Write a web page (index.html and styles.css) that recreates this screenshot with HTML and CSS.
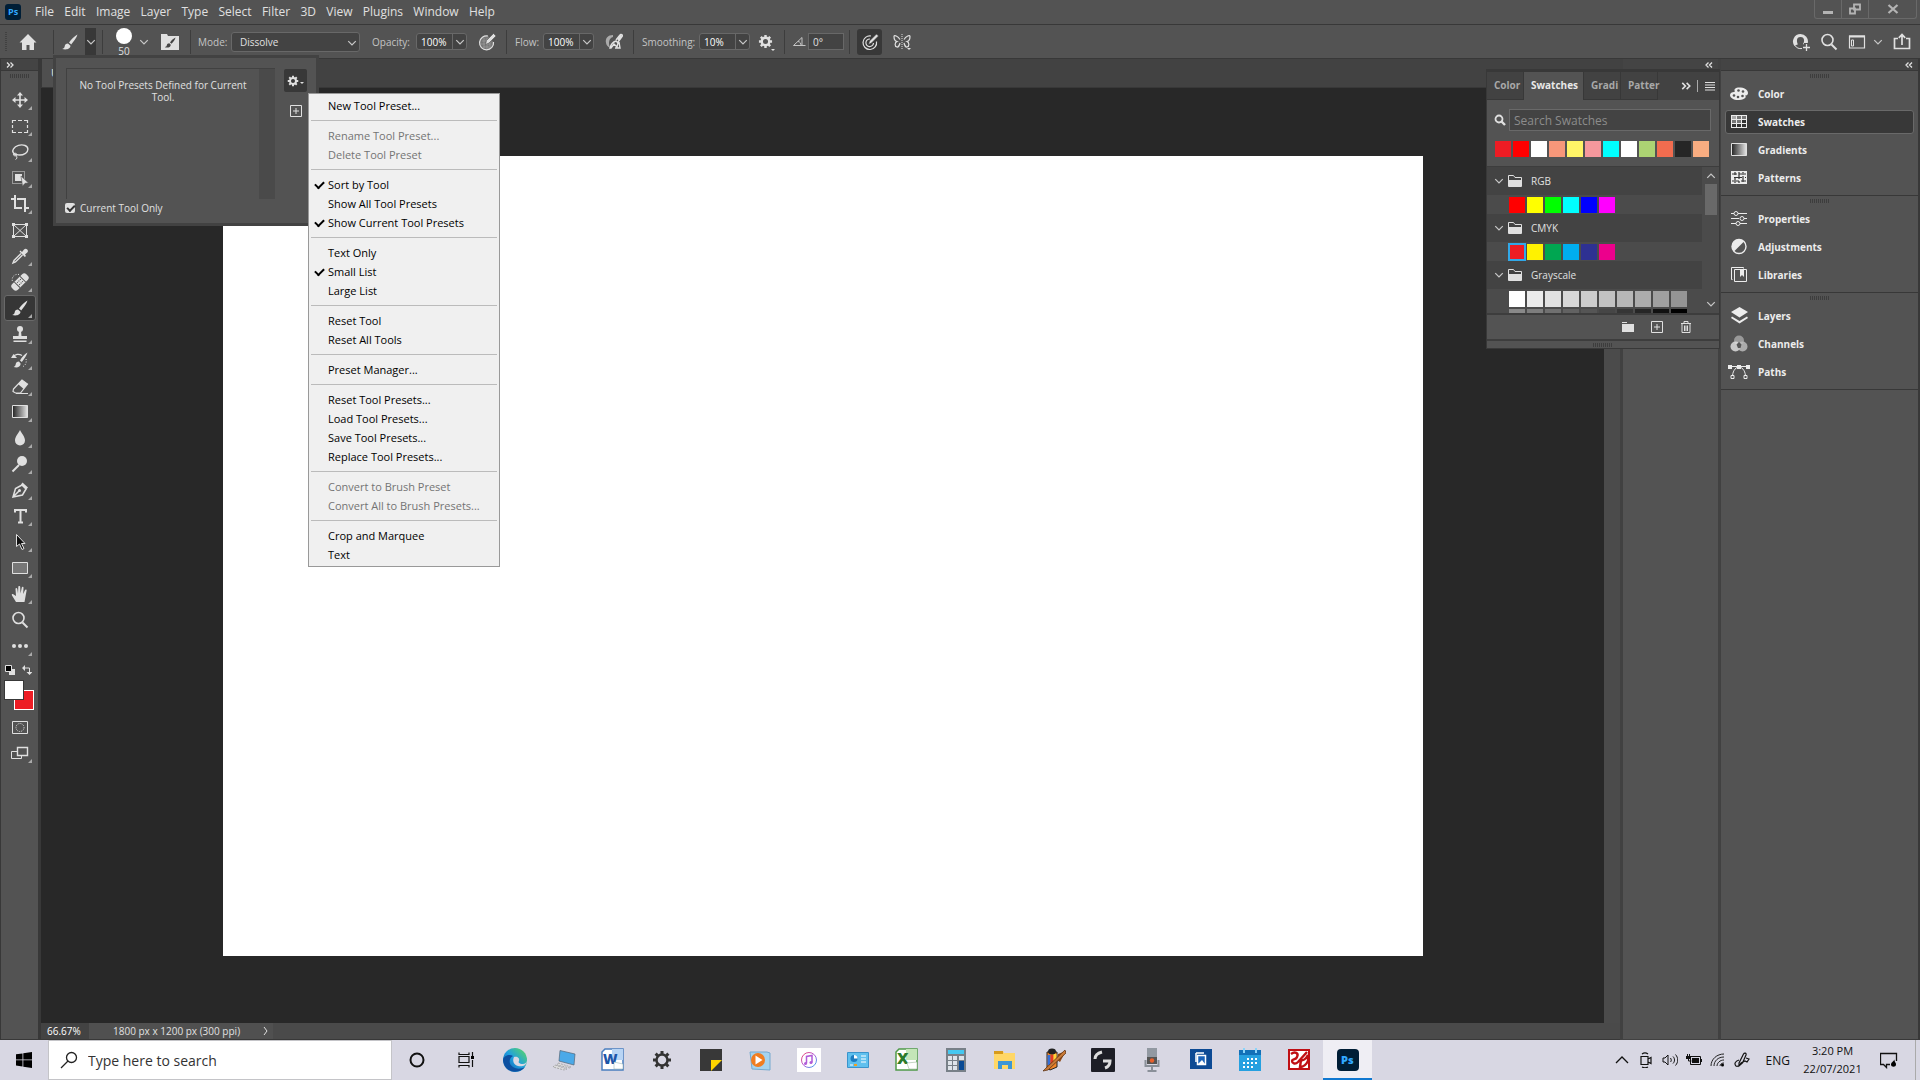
FILE: index.html
```html
<!DOCTYPE html>
<html lang="en">
  <head>
    <meta charset="UTF-8" />
    <meta name="viewport" content="width=device-width, initial-scale=1.0" />
    <title>Photoshop</title>
    <link rel="stylesheet" href="styles.css">
  </head>
  <body>
    <svg class="sprite" aria-hidden="true">
      <defs>
        <linearGradient id="fade"><stop offset="0" stop-color="#222" /><stop offset="1" stop-color="#e6e6e6" /></linearGradient>
        <linearGradient id="edge-blue" x1="0" y1="1" x2="1" y2="0"><stop offset="0" stop-color="#0c4fa0" /><stop offset="0.5" stop-color="#1f9fe0" /><stop offset="1" stop-color="#5fdc5a" /></linearGradient>
        <linearGradient id="tune" x1="0" y1="0" x2="1" y2="1"><stop offset="0" stop-color="#f0446c" /><stop offset="0.5" stop-color="#b05ad8" /><stop offset="1" stop-color="#30b0f0" /></linearGradient>
        <symbol id="chevron" viewBox="0 0 8 8"><path d="M1 2.500l3 3 3-3" fill="none" stroke="currentColor" /></symbol>
        <symbol id="double" viewBox="0 0 8 6"><path d="M1 .5L3.500 3 1 5.500M4.500.5L7 3 4.500 5.500" fill="none" stroke="currentColor" stroke-width="1.300" /></symbol>
        <symbol id="brush" viewBox="0 0 18 18"><path d="M16.500 1.500c-3 1.500-6.500 5-8.500 8l2.200 2c2.500-3 5.500-7 6.300-10zM7 10.500c-2 0-3 1-3.300 2.700-.2 1.300-1 2.200-2.500 2.800 3.300.9 8 .5 8.300-3.200z" fill="currentColor" /></symbol>
        <symbol id="gear" viewBox="0 0 16 16"><circle cx="8" cy="8" r="4" fill="none" stroke="currentColor" stroke-width="2.600" /><path d="M8 1v3M8 12v3M1 8h3M12 8h3M3 3l2.200 2.200M10.800 10.800L13 13M13 3l-2.200 2.200M5.200 10.800L3 13" stroke="currentColor" stroke-width="2.600" /></symbol>
        <symbol id="plus-box" viewBox="0 0 12 12"><path d="M.5.5h11v11H.5zM6 3v6M3 6h6" fill="none" stroke="currentColor" /></symbol>
        <symbol id="folder" viewBox="0 0 14 12"><path d="M.5 11.500V.5h5l1.500 2h6.500v9z" fill="none" stroke="currentColor" /><path d="M1 5h12v6H1z" fill="currentColor" /></symbol>
        <symbol id="glass" viewBox="0 0 18 18"><circle cx="7.500" cy="7" r="5.500" fill="none" stroke="currentColor" stroke-width="1.600" /><path d="M11.500 11.500l5 5" stroke="currentColor" stroke-width="2" /></symbol>
        <symbol id="move" viewBox="0 0 18 18"><path d="M9 3v12M3 9h12" stroke="currentColor" stroke-width="1.600" /><path d="M9 1l3 3.500H6zM9 17l3-3.500H6zM1 9l3.500-3v6zM17 9l-3.500-3v6z" fill="currentColor" /></symbol>
        <symbol id="marquee" viewBox="0 0 18 18"><path d="M1.500 6V3.500H5M7 3.500h4M13 3.500h3.500V6M16.500 8v3M16.500 13v2.500H13M11 15.500H7M5 15.500H1.500V13M1.500 11V8" fill="none" stroke="currentColor" stroke-width="1.200" /></symbol>
        <symbol id="lasso" viewBox="0 0 18 18"><path d="M5 12c-3-1-4-4-2.500-6.200C4.500 2.500 10 1 14 2.500c4 1.600 3.500 5.800.5 7.800-3 1.900-7 2-9.500 1" fill="none" stroke="currentColor" stroke-width="1.400" /><path d="M5.500 10.500c-2-.8-3.500.2-3 1.500s3 1.200 3.500 0M5 12.500c1.500 1.500 1 3.500-.5 4" fill="none" stroke="currentColor" /></symbol>
        <symbol id="object" viewBox="0 0 18 18"><path d="M1.500 2.500h12v12h-12z" fill="none" stroke="currentColor" stroke-dasharray="1 1" /><path d="M4 5h7v7H4z" fill="currentColor" /><path d="M10 7l7.500 7-3.500.3-2.500 3z" fill="currentColor" stroke="#535353" stroke-width=".6" /></symbol>
        <symbol id="crop" viewBox="0 0 18 18"><path d="M4 0v13h7M0 4h3M6 4h8v13M14 13h4" fill="none" stroke="currentColor" stroke-width="2" /></symbol>
        <symbol id="frame" viewBox="0 0 18 18"><path d="M2.500 3.500h13v12h-13zM2.500 3.500l13 12M15.500 3.500l-13 12" fill="none" stroke="currentColor" /><path d="M1 2h3v3H1zM14 2h3v3h-3zM1 14h3v3H1zM14 14h3v3h-3z" fill="currentColor" /></symbol>
        <symbol id="dropper" viewBox="0 0 18 18"><path d="M10 6.500l-7 7-1 2.500 2.500-1 7-7" fill="none" stroke="currentColor" stroke-width="1.400" /><path d="M8.500 4.500l1-1L11 5l2-2.500c2-2 5 .5 3.500 2.800L14 7.500 15 9l-1.200 1z" fill="currentColor" /></symbol>
        <symbol id="heal" viewBox="0 0 18 18"><g transform="rotate(-45 9 9)"><rect x="-1" y="5" width="20" height="8" rx="3" fill="currentColor" /><path d="M5 5v8M13 5v8" stroke="#535353" /><path d="M6.500 7h1v1h-1zM8.500 7h1v1h-1zM10.500 7h1v1h-1zM6.500 10h1v1h-1zM8.500 10h1v1h-1zM10.500 10h1v1h-1z" fill="#444" /></g><path d="M8 1.500C4 .5 0 4 1.500 8.500" fill="none" stroke="currentColor" stroke-dasharray="1 1.500" /></symbol>
        <symbol id="stamp" viewBox="0 0 18 18"><circle cx="9" cy="4" r="3" fill="currentColor" /><path d="M8 6h2l.5 5H16v3H2v-3h5.500zM2.500 15.500h13v1.500h-13z" fill="currentColor" /></symbol>
        <symbol id="history" viewBox="0 0 18 18"><path d="M16.500 1.500c-3 1.500-6 5-7.500 8l1.800 1.500c2.200-3 5-6.500 5.700-9.500zM8 10.500c-2 0-3 1-3.300 2.700-.2 1.300-1 2.200-2 2.800 3 .9 6.500.5 7-3.200z" fill="currentColor" /><path d="M2 6c2-3 6-3.500 9-1.500" fill="none" stroke="currentColor" stroke-width="1.300" /><path d="M0 7l2.500-4L6 7z" fill="currentColor" /><path d="M15 8c1 4-1 7-4 8" fill="none" stroke="currentColor" stroke-dasharray="1 1.500" /></symbol>
        <symbol id="eraser" viewBox="0 0 18 18"><path d="M2.500 12L11 3l5.500 4-7 9h-5L2 14.500z" fill="none" stroke="currentColor" stroke-width="1.200" /><path d="M7 7l4-4 5.500 4-3.800 5z" fill="currentColor" /><path d="M5 16.500h12" stroke="currentColor" /></symbol>
        <symbol id="gradient" viewBox="0 0 18 18"><path d="M1.500 2.500h15v12h-15z" fill="url(#fade)" stroke="#e0e0e0" /></symbol>
        <symbol id="drop" viewBox="0 0 18 18"><path d="M9 1c1.500 3.500 5 6.500 5 10.500a5 5 0 0 1-10 0C4 7.500 7.500 4.500 9 1z" fill="currentColor" /></symbol>
        <symbol id="dodge" viewBox="0 0 18 18"><circle cx="11" cy="6" r="5" fill="currentColor" /><path d="M8 10l-6.500 6.500" stroke="currentColor" stroke-width="2" /></symbol>
        <symbol id="pen" viewBox="0 0 18 18"><path d="M2 16l2.500-8.500L11 4l4 4-3.500 6zM2 16l6-6" fill="none" stroke="currentColor" stroke-width="1.500" /><circle cx="8.500" cy="9.500" r="1.500" fill="currentColor" /><path d="M11.500 1.500l5.500 5-1.800 2L10 3.500z" fill="currentColor" /></symbol>
        <symbol id="type" viewBox="0 0 18 18"><path d="M4 5.500V3h11v2.500M9.500 3v12.500M7 15.500h5" fill="none" stroke="currentColor" stroke-width="2" /></symbol>
        <symbol id="arrow" viewBox="0 0 18 18"><path d="M5.500 1.500v12l3-2.500 2.500 5.500 2-1-2.500-5h3.500z" fill="#111" stroke="currentColor" /></symbol>
        <symbol id="rect" viewBox="0 0 18 18"><path d="M1.500 3.500h15v11h-15z" fill="#777" stroke="currentColor" /></symbol>
        <symbol id="hand" viewBox="0 0 18 18"><path d="M5 17L1 10.500c-1-1.500 1-2 2-.8L5 11 4.500 4c0-1.200 1.600-1.200 1.800 0L7 8.500 7.300 2c0-1.300 1.900-1.300 1.900 0l.3 6.500L10.800 2.500c.2-1.200 1.800-1 1.700.3L12.200 9l1.800-4c.5-1 1.900-.6 1.600.6L13.500 17z" fill="currentColor" /></symbol>
        <symbol id="dots" viewBox="0 0 18 18"><circle cx="3" cy="9" r="2" fill="currentColor" /><circle cx="9" cy="9" r="2" fill="currentColor" /><circle cx="15" cy="9" r="2" fill="currentColor" /></symbol>
        <symbol id="pressure" viewBox="0 0 18 18"><path d="M10 3a7 7 0 1 0 5.500 6" fill="#777" stroke="currentColor" stroke-width="1.200" /><path d="M4 8h7M3 11h9M5 14h6M6 5v10M9 5v11M12 9v6" stroke="#aaa" stroke-width=".5" /><path d="M7.500 11.500l1-4L15.500.5 18 3l-7 7z" fill="currentColor" stroke="#535353" stroke-width=".6" /></symbol>
        <symbol id="target" viewBox="0 0 18 18"><path d="M10 3a6.800 6.800 0 1 0 5.500 5.500M9 6a3.800 3.800 0 1 0 3.500 4" fill="none" stroke="currentColor" stroke-width="1.200" /><path d="M7.500 11.500l1-3.500L15.500 1 17.500 3l-7 7z" fill="currentColor" stroke="#383838" stroke-width=".6" /></symbol>
      </defs>
    </svg>

    <header class="menubar">
      <svg class="ps-logo" viewBox="0 0 16 16"><rect width="16" height="16" rx="3" fill="#001e36" /><text x="3" y="11" class="ps-text">Ps</text></svg>
      <nav class="menus">
        <button>File</button><button>Edit</button><button>Image</button><button>Layer</button><button>Type</button><button>Select</button><button>Filter</button><button>3D</button><button>View</button><button>Plugins</button><button>Window</button><button>Help</button>
      </nav>
      <div class="window-controls">
        <button aria-label="Minimize"><svg viewBox="0 0 12 12"><path d="M1 8h10v3H1z" fill="currentColor" /></svg></button>
        <button aria-label="Restore"><svg viewBox="0 0 12 12"><path d="M5 1.500h6v5H5zM1 5.500h5v5H1z" fill="none" stroke="currentColor" stroke-width="1.800" /></svg></button>
        <button class="close" aria-label="Close"><svg viewBox="0 0 12 12"><path d="M1.500 2l9 8M10.500 2l-9 8" stroke="currentColor" stroke-width="2.200" /></svg></button>
      </div>
    </header>

    <section class="options">
      <span class="grip-v"></span>
      <button class="home" aria-label="Home"><svg class="icon" viewBox="0 0 18 18"><path d="M9 1L.5 9.500H3V17h4.500v-5h3v5H15V9.500h2.500z" fill="currentColor" /></svg></button>
      <span class="sep"></span>
      <button class="tool-now" aria-label="Brush"><svg class="icon"><use href="#brush" /></svg></button>
      <button class="tool-open" aria-label="Tool presets"><svg class="chev"><use href="#chevron" /></svg></button>
      <span class="sep"></span>
      <button class="tip"><i></i>50</button>
      <svg class="chev"><use href="#chevron" /></svg>
      <button class="brush-panel" aria-label="Brush settings"><svg class="icon" viewBox="0 0 18 18"><path d="M0 1h6l1 2h11v14H0z" fill="currentColor" /><path d="M14.500 4.500c-3 1.500-4 3-5.500 5l1.500 1.300c2-2 3.500-4 4-6.300zM8.300 10.300c-1.500 0-2.300.7-2.500 2-.1 1-1 1.500-2 2 3 .7 5.800.2 6-2.500z" fill="#444" /></svg></button>
      <span class="sep"></span>
      <label for="mode" class="mode-label">Mode:</label>
      <span class="select-box"><select id="mode"><option>Dissolve</option></select><svg class="chev"><use href="#chevron" /></svg></span>
      <label for="opacity" class="opacity-label">Opacity:</label>
      <span class="number"><input id="opacity" type="text" value="100%"><button aria-label="Opacity slider"><svg class="chev"><use href="#chevron" /></svg></button></span>
      <button class="pressure" aria-label="Pressure for opacity"><svg class="icon"><use href="#pressure" /></svg></button>
      <span class="sep"></span>
      <label for="flow" class="flow-label">Flow:</label>
      <span class="number"><input id="flow" type="text" value="100%"><button aria-label="Flow slider"><svg class="chev"><use href="#chevron" /></svg></button></span>
      <button class="pressure" aria-label="Airbrush"><svg class="icon" viewBox="0 0 18 18"><path d="M8 2C3 2 0 5 1 10c.5 2.500 2 4 4 4.500C3 10 4 5 8 4z" fill="#aaa" /><path d="M5 15c1-4 3-6 6-7l2 2-1 4-3-3-3 4zM11 7l4-5c1-1.500 3 0 2 1.500l-4 5.500M14 9l1 6-5 0" fill="none" stroke="currentColor" stroke-width="1.400" /><path d="M12 6l3.500-4.500 2 1.500L14 8z" fill="currentColor" /></svg></button>
      <span class="sep"></span>
      <label for="smoothing" class="smoothing-label">Smoothing:</label>
      <span class="number"><input id="smoothing" type="text" value="10%"><button aria-label="Smoothing slider"><svg class="chev"><use href="#chevron" /></svg></button></span>
      <button class="smooth-gear" aria-label="Smoothing options"><svg class="icon" viewBox="0 0 18 18"><use href="#gear" width="15" height="15" y="1" /><path d="M13 16h4l-2 2z" fill="currentColor" /></svg></button>
      <span class="sep"></span>
      <label for="angle" class="angle-label" aria-label="Angle"><svg viewBox="0 0 14 10"><path d="M10 .5L1.500 8.500h12M6 4.500c2 0 3 2 3 4M10 .5v8" fill="none" stroke="currentColor" /></svg></label>
      <input id="angle" class="angle" type="text" value="0°">
      <span class="sep"></span>
      <button class="size-pressure" aria-label="Pressure for size"><svg class="icon"><use href="#target" /></svg></button>
      <button class="symmetry" aria-label="Symmetry"><svg class="icon" viewBox="0 0 18 18"><path d="M7 6.500C5 3 1 1.500 1 3.500c0 2.500 1 4.500 3 5C1.500 9.500 1.500 13.500 4 14c2 .4 2.500-2 3-4M11 6.500C13 3 17 1.500 17 3.500c0 2.500-1 4.500-3 5 2.500 1 2.500 5 0 5.500-2 .4-2.500-2-3-4" fill="none" stroke="currentColor" stroke-width="1.200" /><path d="M9 1v16" stroke="currentColor" stroke-dasharray="1 1" /><path d="M14 15h4l-2 2z" fill="currentColor" /></svg></button>
      <div class="options-right">
        <button aria-label="Account"><svg class="icon" viewBox="0 0 18 18"><path d="M8.500 1a7.500 7.500 0 0 0-6 12c1.200-.7 2.500-1 3.500-1.700C4.500 9 4 4 8.500 4S12.500 9 11 11l1 .5V10h3.800A7.500 7.500 0 0 0 8.500 1z" fill="currentColor" /><path d="M3 12.500c1.500 2.500 4 3.500 7 3" fill="none" stroke="currentColor" /><path d="M14.500 11v7M11 14.500h7" stroke="currentColor" stroke-width="1.300" /></svg></button>
        <button aria-label="Search"><svg class="icon"><use href="#glass" /></svg></button>
        <button aria-label="Workspace"><svg class="icon" viewBox="0 0 18 18"><path d="M1.500 3v12h15V3z" fill="none" stroke="currentColor" stroke-width="1.200" /><path d="M1 2.500h16v2H1z" fill="currentColor" /><path d="M3.500 7h2v6h-2z" fill="none" stroke="currentColor" /></svg></button>
        <svg class="chev"><use href="#chevron" /></svg>
        <button aria-label="Share"><svg class="icon" viewBox="0 0 18 18"><path d="M5 5.500H1.500v10h15v-10H13M9 12V2M5.800 4.800L9 1.500l3.200 3.300" fill="none" stroke="currentColor" stroke-width="1.700" /></svg></button>
      </div>
    </section>

    <main class="workspace">
      <aside class="tools">
        <div class="strip"><svg class="double"><use href="#double" /></svg></div>
        <div class="grip"></div>
        <button class="tool" aria-label="Move"><svg class="icon"><use href="#move" /></svg></button>
        <button class="tool" aria-label="Marquee"><svg class="icon"><use href="#marquee" /></svg></button>
        <button class="tool" aria-label="Lasso"><svg class="icon"><use href="#lasso" /></svg></button>
        <button class="tool" aria-label="Object selection"><svg class="icon"><use href="#object" /></svg></button>
        <button class="tool" aria-label="Crop"><svg class="icon"><use href="#crop" /></svg></button>
        <button class="tool single" aria-label="Frame"><svg class="icon"><use href="#frame" /></svg></button>
        <button class="tool" aria-label="Eyedropper"><svg class="icon"><use href="#dropper" /></svg></button>
        <button class="tool" aria-label="Healing brush"><svg class="icon"><use href="#heal" /></svg></button>
        <button class="tool active" aria-label="Brush"><svg class="icon"><use href="#brush" /></svg></button>
        <button class="tool" aria-label="Clone stamp"><svg class="icon"><use href="#stamp" /></svg></button>
        <button class="tool" aria-label="History brush"><svg class="icon"><use href="#history" /></svg></button>
        <button class="tool" aria-label="Eraser"><svg class="icon"><use href="#eraser" /></svg></button>
        <button class="tool" aria-label="Gradient"><svg class="icon"><use href="#gradient" /></svg></button>
        <button class="tool" aria-label="Blur"><svg class="icon"><use href="#drop" /></svg></button>
        <button class="tool" aria-label="Dodge"><svg class="icon"><use href="#dodge" /></svg></button>
        <button class="tool" aria-label="Pen"><svg class="icon"><use href="#pen" /></svg></button>
        <button class="tool" aria-label="Type"><svg class="icon"><use href="#type" /></svg></button>
        <button class="tool" aria-label="Path selection"><svg class="icon"><use href="#arrow" /></svg></button>
        <button class="tool" aria-label="Rectangle"><svg class="icon"><use href="#rect" /></svg></button>
        <button class="tool" aria-label="Hand"><svg class="icon"><use href="#hand" /></svg></button>
        <button class="tool single" aria-label="Zoom"><svg class="icon"><use href="#glass" /></svg></button>
        <button class="tool" aria-label="More tools"><svg class="icon"><use href="#dots" /></svg></button>
        <div class="swap">
          <svg viewBox="0 0 10 10"><path d="M4 4h6v6H4z" fill="#e0e0e0" /><path d="M.5.5h6v6h-6z" fill="#000" stroke="#e0e0e0" /></svg>
          <svg viewBox="0 0 10 10"><path d="M2 3h5.500v5" fill="none" stroke="#e0e0e0" /><path d="M3 0v6L0 3zM4.500 7h6l-3 3z" fill="#e0e0e0" /></svg>
        </div>
        <div class="colors"><span class="back"></span><span class="front"></span></div>
        <button class="tool single" aria-label="Quick mask"><svg class="icon" viewBox="0 0 18 18"><path d="M1.500 3.500h15v12h-15z" fill="none" stroke="currentColor" /><circle cx="9" cy="9.500" r="4" fill="none" stroke="currentColor" stroke-dasharray="1 1" /></svg></button>
        <button class="tool" aria-label="Screen mode"><svg class="icon" viewBox="0 0 18 18"><path d="M.5 7.500h10v7H.5z" fill="none" stroke="currentColor" /><path d="M6.500 3.500h10v8h-10z" fill="#535353" stroke="currentColor" stroke-width="1.400" /></svg></button>
      </aside>

      <section class="document">
        <div class="doc-tabs"><span class="doc-tab">U</span></div>
        <div class="view">
          <div class="canvas"><div class="paper"></div></div>
          <div class="scroll-v"></div>
        </div>
        <footer class="status"><span class="zoom">66.67%</span><span class="doc-size">1800 px x 1200 px (300 ppi)<svg viewBox="0 0 6 10"><path d="M1 1l3 4-3 4" fill="none" stroke="currentColor" /></svg></span></footer>
      </section>

      <aside class="column"><div class="strip right"><svg class="double flip"><use href="#double" /></svg></div></aside>

      <aside class="dock">
        <div class="strip right"><svg class="double flip"><use href="#double" /></svg></div>
        <div class="dock-group">
          <div class="grip"></div>
          <button><svg class="icon" viewBox="0 0 18 18"><path d="M9 2.500c5 0 9 2 9 5.500 0 2-1.500 2.500-3 2.500 1.500 1 1 4-6 4.500C4 15.300 0 13 0 10c0-2 2-3 4-3 1 0 1-1 .5-1.500C4 4 6 2.500 9 2.500z" fill="currentColor" /><circle cx="8.500" cy="5.500" r="1.300" fill="#535353" /><circle cx="13" cy="6.500" r="1.300" fill="#535353" /><circle cx="12.500" cy="11" r="1.300" fill="#535353" /><circle cx="8" cy="12" r="1.300" fill="#535353" /><circle cx="4" cy="10.500" r="1.300" fill="#535353" /></svg>Color</button>
          <button class="selected"><svg class="icon" viewBox="0 0 18 18"><path d="M1 2h16v13H1z" fill="currentColor" /><path d="M2 3h4v3H2z" fill="#aaa" /><path d="M7 3h4v3H7zM12 3h4v3h-4zM2 7h4v3H2zM7 7h4v3H7z" fill="#777" /><path d="M12 7h4v3h-4zM2 11h4v3H2zM7 11h4v3H7zM12 11h4v3h-4z" fill="#333" /></svg>Swatches</button>
          <button><svg class="icon"><use href="#gradient" /></svg>Gradients</button>
          <button><svg class="icon" viewBox="0 0 18 18"><path d="M1 2h16v13H1z" fill="currentColor" /><path d="M2 5h5M9 5h3M14 5h2M4 8.500h8M2 12h2M6 12h3M11 12h5M5 3v3M5 8v6M9 3v7M9 12v2M13 3v3M13 7v6M15 8.500h1" stroke="#333" stroke-width="1.200" /></svg>Patterns</button>
        </div>
        <div class="dock-group">
          <div class="grip"></div>
          <button><svg class="icon" viewBox="0 0 18 18"><path d="M1 3.500h3M8 3.500h9M1 8.500h8M14 8.500h3M1 13.500h5M10 13.500h7" stroke="currentColor" /><g fill="none" stroke="currentColor"><circle cx="6" cy="3.500" r="2" /><circle cx="12" cy="8.500" r="2" /><circle cx="8" cy="13.500" r="2" /></g></svg>Properties</button>
          <button><svg class="icon" viewBox="0 0 18 18"><circle cx="9" cy="8.500" r="7" fill="none" stroke="currentColor" stroke-width="1.400" /><path d="M14 3.500a7 7 0 0 0-10 10z" fill="currentColor" /></svg>Adjustments</button>
          <button><svg class="icon" viewBox="0 0 18 18"><path d="M4.500 3.500h12v12h-12zM2.500 13.500h-1v-12h12v1" fill="none" stroke="currentColor" /><path d="M10 4h4v7l-2-2-2 2z" fill="currentColor" /></svg>Libraries</button>
        </div>
        <div class="dock-group">
          <div class="grip"></div>
          <button><svg class="icon" viewBox="0 0 18 18"><path d="M9.500 0L18 5l-8.500 5.500L1 5z" fill="currentColor" /><path d="M2 9.500l7.500 4.500L17 9.500l1 1.500-8.500 5.500L1 11z" fill="currentColor" /></svg>Layers</button>
          <button><svg class="icon" viewBox="0 0 18 18"><circle cx="9" cy="5.500" r="5" fill="#999" /><circle cx="5.500" cy="11.500" r="5" fill="#ddd" fill-opacity=".85" /><circle cx="12.500" cy="11.500" r="5" fill="#bbb" fill-opacity=".85" /><path d="M9 7l2.500 2.500-1 3.500H8L6.500 9.500z" fill="#555" /></svg>Channels</button>
          <button><svg class="icon wide" viewBox="0 0 22 18"><path d="M2 3.500h18M4.500 14c0-5 2-9 6.500-10.500 4.500 1.500 6.500 5.500 6.500 10.500" fill="none" stroke="currentColor" /><path d="M0 2h4v4H0zM9 2h4v4H9zM18 2h4v4h-4z" fill="currentColor" /><path d="M3 12.500h3v3H3zM16 12.500h3v3h-3z" fill="#535353" stroke="currentColor" /></svg>Paths</button>
        </div>
      </aside>

      <section class="swatch-panel">
        <div class="panel-tabs">
          <button>Color</button><button class="current">Swatches</button><button aria-label="Gradients">Gradi</button><button aria-label="Patterns">Patter</button>
          <svg class="more"><use href="#double" /></svg><i></i>
          <svg class="burger" viewBox="0 0 10 9"><path d="M0 .5h10M0 3h10M0 5.500h10M0 8h10" stroke="currentColor" /></svg>
        </div>
        <div class="search"><svg class="search-icon" viewBox="0 0 12 12"><circle cx="5" cy="5" r="3.500" fill="none" stroke="currentColor" stroke-width="1.800" /><path d="M7.500 7.500l3.500 3.500" stroke="currentColor" stroke-width="2.400" /></svg><input type="text" placeholder="Search Swatches" aria-label="Search Swatches"></div>
        <div class="chips recent" data-colors="#ed1c24 #ff0000 #ffffff #f7977a #fff467 #f5989d #00ffff #ffffff #acd373 #f26c4f #262626 #f9ad81"></div>
        <div class="swatch-body">
          <div class="swatch-list">
            <div class="folder-row"><svg class="chev"><use href="#chevron" /></svg><svg class="folder"><use href="#folder" /></svg>RGB</div>
            <div class="chips" data-colors="#ff0000 #ffff00 #00ff00 #00ffff #0000ff #ff00ff"></div>
            <div class="folder-row"><svg class="chev"><use href="#chevron" /></svg><svg class="folder"><use href="#folder" /></svg>CMYK</div>
            <div class="chips picked" data-colors="#ed1c24 #fff200 #00a651 #00aeef #2e3192 #ec008c"></div>
            <div class="folder-row"><svg class="chev"><use href="#chevron" /></svg><svg class="folder"><use href="#folder" /></svg>Grayscale</div>
            <div class="chips gray" data-colors="#ffffff #ebebeb #e1e1e1 #d7d7d7 #cccccc #c2c2c2 #b7b7b7 #acacac #a0a0a0 #959595 #898989 #7d7d7d #707070 #626262 #555555 #464646 #363636 #262626 #111111 #000000"></div>
          </div>
          <div class="swatch-scroll"><svg class="chev up"><use href="#chevron" /></svg><i></i><svg class="chev"><use href="#chevron" /></svg></div>
        </div>
        <div class="panel-foot">
          <button aria-label="New group"><svg viewBox="0 0 12 12"><path d="M0 1h5v1H0zM0 3h12v8H0z" fill="currentColor" /></svg></button>
          <button aria-label="New swatch"><svg><use href="#plus-box" /></svg></button>
          <button aria-label="Delete swatch"><svg viewBox="0 0 12 12"><path d="M1 2.500h10M4 2V.5h4V2M2 3v8.500h8V3M4.500 4.500v5.500M6 4.500v5.500M7.500 4.500v5.500" fill="none" stroke="currentColor" /></svg></button>
        </div>
        <div class="grip"></div>
      </section>
    </main>

    <section class="presets">
      <div class="preset-list"><p>No Tool Presets Defined for Current Tool.</p><i></i></div>
      <div class="preset-side">
        <button class="preset-gear" aria-label="Preset options"><svg class="gear"><use href="#gear" /></svg><i></i></button>
        <button aria-label="New preset"><svg class="plus"><use href="#plus-box" /></svg></button>
      </div>
      <label class="current-only"><input type="checkbox" checked>Current Tool Only</label>
    </section>

    <div class="menu" role="menu">
      <button>New Tool Preset...</button>
      <hr>
      <button disabled>Rename Tool Preset...</button>
      <button disabled>Delete Tool Preset</button>
      <hr>
      <button class="checked">Sort by Tool</button>
      <button>Show All Tool Presets</button>
      <button class="checked">Show Current Tool Presets</button>
      <hr>
      <button>Text Only</button>
      <button class="checked">Small List</button>
      <button>Large List</button>
      <hr>
      <button>Reset Tool</button>
      <button>Reset All Tools</button>
      <hr>
      <button>Preset Manager...</button>
      <hr>
      <button>Reset Tool Presets...</button>
      <button>Load Tool Presets...</button>
      <button>Save Tool Presets...</button>
      <button>Replace Tool Presets...</button>
      <hr>
      <button disabled>Convert to Brush Preset</button>
      <button disabled>Convert All to Brush Presets...</button>
      <hr>
      <button>Crop and Marquee</button>
      <button>Text</button>
    </div>

    <footer class="taskbar">
      <button class="start" aria-label="Start"><svg viewBox="0 0 16 16"><path d="M0 2.300L6.500 1.400v6.100H0zM7.300 1.300L16 0v7.500H7.300zM0 8.300h6.500v6.200L0 13.600zM7.300 8.300H16V16l-8.700-1.300z" /></svg></button>
      <div class="task-search"><svg viewBox="0 0 18 18"><circle cx="11.500" cy="6.500" r="5" fill="none" stroke="#222" stroke-width="1.300" /><path d="M8 10l-7 7" stroke="#222" stroke-width="1.300" /></svg><input type="text" placeholder="Type here to search" aria-label="Type here to search"></div>
      <div class="apps">
        <button aria-label="Cortana"><svg viewBox="0 0 24 24"><circle cx="12" cy="12" r="6.500" fill="none" stroke="#111" stroke-width="2" /></svg></button>
        <button aria-label="Task view"><svg viewBox="0 0 24 24"><path d="M5 4.500v2h10v-2M5 19.500v-2h10v2M5 8.500h10v6H5zM18.500 4v4M18.500 12v7" fill="none" stroke="#111" stroke-width="1.200" /><path d="M17 8h3v3h-3z" /></svg></button>
        <button aria-label="Edge"><svg viewBox="0 0 24 24"><circle cx="12" cy="12" r="12" fill="url(#edge-blue)" /><path d="M0 12c1-5 7-6 10-4-4 2-5 8 0 11 4 2.500 8 2 12 0-5 7-20 7-22-7z" fill="#0c4fa0" /><path d="M11 9c3-1 6 1 5 4-1 1 0 3 4 3 2 0 3-1 4-3-1 5-5 6-9 5-4-1-6-5-4-9z" fill="#d8d7e3" /></svg></button>
        <button aria-label="Remote desktop"><svg viewBox="0 0 24 24"><path d="M8 2.500l15 3.500-1 11L7 13z" fill="#4ba9e8" stroke="#567" stroke-width=".7" /><path d="M6 15l13 4-1 1-13-3zM3 17l12 4-3 1-11-3z" fill="#ddd" stroke="#888" stroke-width=".6" stroke-dasharray="2 1" /></svg></button>
        <button aria-label="Word"><svg viewBox="0 0 24 24"><path d="M1 4l3-3h18v21H1z" fill="#fff" stroke="#4a7fc0" stroke-width="1.500" /><path d="M11 1h11v11H11z" fill="#b8d4f4" /><text x="2" y="16" class="letter word">W</text><path d="M13 14l9 2v5h-9z" fill="#fff" stroke="#8aa" stroke-width=".5" /></svg></button>
        <button aria-label="Settings"><svg viewBox="0 0 24 24"><circle cx="12" cy="12" r="5.500" fill="none" stroke="#333" stroke-width="2.500" /><path d="M12 3v3M12 18v3M3 12h3M18 12h3M5.600 5.600l2.200 2.200M16.200 16.200l2.200 2.200M18.400 5.600l-2.200 2.200M7.800 16.200l-2.200 2.200" stroke="#333" stroke-width="3" /></svg></button>
        <button aria-label="Sticky notes"><svg viewBox="0 0 24 24"><path d="M1 1h22v22H1z" fill="#383838" /><path d="M12 12h11L12 23z" fill="#ffd500" /></svg></button>
        <button aria-label="Media player"><svg viewBox="0 0 24 24"><path d="M2 4h17l3 1v17l-18-1z" fill="#a5d3ee" stroke="#74a9cf" /><circle cx="10" cy="12" r="7" fill="#f07d20" /><path d="M7.500 7.500l7 4.500-7 4.500z" fill="#fff" /></svg></button>
        <button aria-label="iTunes"><svg viewBox="0 0 24 24"><path d="M0 0h24v24H0z" fill="#fff" /><circle cx="12" cy="12" r="7.500" fill="none" stroke="url(#tune)" /><path d="M9.500 15.500V8.500l5.500-1v7" fill="none" stroke="#b05ad8" stroke-width="1.500" /><circle cx="8.500" cy="15.500" r="1.500" fill="#b05ad8" /><circle cx="14" cy="14.500" r="1.500" fill="#b05ad8" /></svg></button>
        <button aria-label="Control panel"><svg viewBox="0 0 24 24"><path d="M1.500 4.500h21v15h-21z" fill="#5fc0ee" stroke="#3a94cc" /><circle cx="8" cy="10.500" r="3.500" fill="#1c7cc0" /><path d="M8 7v3.500h3.500A3.500 3.500 0 0 0 8 7z" fill="#fff" /><path d="M15 8h5M15 11h5M15 14h5M4 17h3" stroke="#fff" /><path d="M8 17h3" stroke="#f0a020" stroke-width="2" /></svg></button>
        <button aria-label="Excel"><svg viewBox="0 0 24 24"><path d="M1 4l3-3h18v21H1z" fill="#fff" stroke="#4f9a4a" stroke-width="1.500" /><path d="M11 1h11v11H11z" fill="#c4e6b8" /><text x="2" y="16" class="letter excel">X</text><path d="M12 15l10-1v7h-8z" fill="#fff" stroke="#8a8" stroke-width=".5" /></svg></button>
        <button aria-label="Calculator"><svg viewBox="0 0 24 24"><path d="M2 0h20v24H2z" fill="#788088" /><path d="M4 2h16v4H4z" fill="#45c8f0" /><path d="M4 8h4v4H4zM9 8h4v4H9zM15 8h5v4h-5zM4 13h4v4H4zM9 13h4v4H9zM4 18h4v4H4zM9 18h4v4H9z" fill="#dfe4ea" /><path d="M15 13h5v9h-5z" fill="#0a4a94" /></svg></button>
        <button aria-label="File Explorer"><svg viewBox="0 0 24 24"><path d="M1 3h9l1 2h11v16H1z" fill="#ffd766" /><path d="M1 3h9v3H1z" fill="#d79b1c" /><path d="M5 21v-8h14v8h-4v-4H9v4z" fill="#3c96d6" /></svg></button>
        <button aria-label="Paint"><svg viewBox="0 0 24 24"><path d="M5 4h10v15l-7 3-3-2z" fill="#f0862a" stroke="#222" /><path d="M5.500 7h3v10h-3z" fill="#3470d8" /><path d="M8.500 7h3v9h-3z" fill="#e63a22" /><path d="M11.500 6h3v7h-3z" fill="#ffd23a" /><ellipse cx="10" cy="3.500" rx="4" ry="3" fill="#222" /><path d="M16 6l8-3-6 11-3-2z" fill="#8f4a18" /><path d="M23 2L3 21l-2 2 5-1L24 5z" fill="#c87a38" stroke="#532a0c" stroke-width=".7" /></svg></button>
        <button aria-label="Logitech"><svg viewBox="0 0 24 24"><rect width="24" height="24" rx="1" fill="#1d1e26" /><path d="M4 11c0-4 3-6 7-7M12 13h7c0 4-2 6-5 7" fill="none" stroke="#ddd" stroke-width="3" /></svg></button>
        <button aria-label="Voice recorder"><svg viewBox="0 0 24 24"><path d="M7 0h10v9H7z" fill="#9299a2" /><path d="M7 9h10v7H7z" fill="#555" /><circle cx="12" cy="12.500" r="2.200" fill="#e8602c" /><path d="M5.500 12v6h13v-6M12 18v5M7.500 23h9" fill="none" stroke="#8a9099" stroke-width="2" /></svg></button>
        <button aria-label="Photos"><svg viewBox="0 0 24 24"><path d="M1 1h22v20H1z" fill="#0d4a94" /><path d="M7 5h8M7 5v9" stroke="#fff" stroke-width="1.500" /><path d="M8.500 7.500h8v9h-8z" fill="#1a62b8" stroke="#fff" stroke-width="1.500" /><path d="M9 16l4-4 3 4z" fill="#fff" /></svg></button>
        <button aria-label="Calendar"><svg viewBox="0 0 24 24"><path d="M1 2h22v21H1z" fill="#26a0e0" /><path d="M1 2h22v5H1z" fill="#1270b8" /><path d="M6 0v5M18 0v5" stroke="#8ad4fa" stroke-width="2" /><path d="M9 11h11M5 15h15M5 19h11" stroke="#fff" stroke-width="2" stroke-dasharray="2 2" /></svg></button>
        <button aria-label="Drawing"><svg viewBox="0 0 24 24"><path d="M1 1h22v21H1z" fill="#c00f14" /><path d="M3 3h18v17H3z" fill="#fff" /><path d="M4 6c4-3 8-1 6 3-1 3-5 2-5 4s3 4 6 1l9-10M13 19l1-7c2 1 5-1 7-5v6c-2 4-5 6-8 6z" fill="none" stroke="#c00f14" stroke-width="2.400" /></svg></button>
        <button class="running" aria-label="Photoshop"><svg viewBox="0 0 24 24"><rect x="1" y="1" width="22" height="22" rx="4" fill="#001e36" /><text x="5" y="16" class="letter ps">Ps</text></svg></button>
      </div>
      <div class="tray">
        <svg viewBox="0 0 16 16"><path d="M2 11l6-6 6 6" fill="none" stroke="#111" stroke-width="1.300" /></svg>
        <svg viewBox="0 0 16 16"><path d="M3 4.500h7v8H3zM10 7l3-1.500v6L10 10M4 2c2-1.500 4-1.500 6 0M4 15c2 1 4 1 6 0" fill="none" stroke="#111" stroke-width="1.200" /></svg>
        <svg viewBox="0 0 16 16"><path d="M1 6h2l3-3v10l-3-3H1zM8.500 6c1 1.500 1 3 0 4M11 4.500c2 2 2 5 0 7M13.500 2.500c3 3.500 3 7.500 0 11" fill="none" stroke="#111" /></svg>
        <svg viewBox="0 0 16 16"><path d="M4.500 4.500h10v8h-10z" fill="none" stroke="#111" /><path d="M6 6h7v5H6zM0 4h5v3H0zM15 7h1v3h-1z" fill="#111" /><path d="M1.500 2v3M3.500 2v3M2.500 5v4h3" stroke="#111" fill="none" /></svg>
        <svg viewBox="0 0 16 16"><path d="M1 14C1 7 7 2 14 2M4 14c0-5 4-9 10-9M7 14c0-3 3-6 7-6M10 14c0-2 2-3 4-3" fill="none" stroke="#222" /><circle cx="12.500" cy="13" r="1.500" /></svg>
        <svg viewBox="0 0 16 16"><path d="M5 11L9.500 2c1-1.500 3-1 2.500 1L8.500 11 5 14zM5 8c-4 1-5 4-3 6 2 1 4-1 5-3l4-2 2 1 2-3-3-1" fill="none" stroke="#111" stroke-width="1.200" /></svg>
        <span class="lang">ENG</span>
        <time>3:20 PM<br>22/07/2021</time>
        <svg class="note" viewBox="0 0 18 18"><path d="M10 13.500H6.500v3l-3-3h-3v-11h16V10" fill="none" stroke="#111" stroke-width="1.300" /><path d="M14 8c1 2-3 3-3 5.500 0 3 5 3 5 0 0-1.500-.5-2-1-2.500" /></svg>
        <i></i>
      </div>
    </footer>

    <script>
      // fill every row of swatches from its colour list
      document.querySelectorAll(".chips").forEach((row) => {
        row.dataset.colors.split(" ").forEach((color) => {
          const chip = document.createElement("span");
          chip.style.backgroundColor = color;
          row.appendChild(chip);
        });
      });
    </script>
  </body>
</html>
```
FILE: styles.css
```css
* {
  box-sizing: border-box;
}
body {
  margin: 0;
  height: 100vh;
  display: flex;
  flex-direction: column;
  overflow: hidden;
  font-family: "Open Sans", "Noto Sans", sans-serif;
  font-size: 11px;
  color: #e0e0e0;
  background: #535353;
}
button {
  border: none;
  padding: 0;
  background: none;
  color: inherit;
  font: inherit;
}
button,
svg,
label {
  flex: none;
}
input,
select {
  font: inherit;
  color: inherit;
}
svg {
  display: block;
}
.sprite {
  position: absolute;
  width: 0;
  height: 0;
}
.icon {
  width: 18px;
  height: 18px;
}
.chev {
  width: 10px;
  height: 10px;
  color: #c8c8c8;
}

/* menu bar */
.menubar {
  display: flex;
  height: 25px;
  border-bottom: 1px solid #383838;
  padding-left: 5px;
}
.ps-logo {
  width: 16px;
  height: 16px;
  margin: 4px 9px 0 0;
}
.ps-text {
  font-size: 9px;
  font-weight: 700;
  fill: #31a8ff;
}
.menus {
  display: flex;
  justify-content: space-between;
  width: 470px;
}
.menus button {
  height: 23px;
  padding: 0 5px;
  font-size: 12px;
}
.window-controls {
  display: flex;
  height: 19px;
  margin: 0 3px 0 auto;
  border: 1px solid #696969;
  border-top: none;
  border-radius: 0 0 3px 3px;
}
.window-controls button {
  width: 27px;
  display: grid;
  place-items: center;
  border-right: 1px solid #696969;
  color: #b4b4b4;
}
.window-controls .close {
  width: 47px;
  border: none;
}
.window-controls svg {
  width: 12px;
  height: 12px;
}

/* options bar */
.options {
  display: flex;
  align-items: center;
  height: 34px;
  padding-left: 5px;
  border-bottom: 1px solid #383838;
}
.grip-v {
  width: 2px;
  height: 20px;
  background: repeating-linear-gradient(#414141 0 1px, transparent 1px 2px);
}
.sep {
  width: 1px;
  height: 24px;
  background: #3d3d3d;
}
.options button {
  display: grid;
  place-items: center;
}
.home {
  width: 42px;
  margin-right: 4px;
}
.tool-now {
  width: 31px;
}
.tool-open {
  width: 11px;
  height: 27px;
  background: #383838;
  margin-right: 6px;
}
.options .tip {
  width: 30px;
  margin-left: 6px;
  font-size: 10px;
  line-height: 10px;
}
.tip i {
  width: 16px;
  height: 16px;
  border-radius: 50%;
  background: #fff;
  margin-bottom: 2px;
}
.brush-panel {
  width: 41px;
}
.options label {
  font-size: 10px;
  color: #c4c4c4;
}
.options .mode-label {
  width: 40px;
  padding-left: 7px;
}
.opacity-label {
  width: 56px;
  padding-left: 12px;
}
.flow-label {
  width: 36px;
  padding-left: 8px;
}
.smoothing-label {
  width: 65px;
  padding-left: 8px;
}
.select-box {
  position: relative;
  width: 129px;
  height: 20px;
}
.select-box select {
  appearance: none;
  width: 100%;
  height: 20px;
  padding: 0 8px;
  font-size: 10px;
  background: #434343;
  border: 1px solid #686868;
  border-radius: 3px;
}
.select-box .chev {
  position: absolute;
  right: 3px;
  top: 6px;
}
.number {
  display: flex;
  width: 51px;
  height: 17px;
  border: 1px solid #686868;
  border-radius: 3px;
  background: #434343;
}
.number input {
  width: 35px;
  border: none;
  padding: 0 0 0 4px;
  background: none;
  font-size: 10px;
  color: #fff;
}
.number button {
  width: 14px;
  border-left: 1px solid #686868;
}
.pressure {
  width: 39px;
}
.smooth-gear {
  width: 34px;
}
.angle-label {
  width: 23px;
  padding-left: 7px;
}
.angle-label svg {
  width: 14px;
  height: 10px;
}
.angle {
  width: 36px;
  height: 17px;
  padding: 0 4px;
  font-size: 10px;
  background: #434343;
  border: 1px solid #686868;
  margin-right: 5px;
}
.size-pressure {
  width: 25px;
  height: 26px;
  margin-left: 7px;
  background: #383838;
  border-radius: 3px;
}
.symmetry {
  width: 39px;
}
.options-right {
  display: flex;
  align-items: center;
  gap: 10px;
  margin: 0 9px 0 auto;
}
.options-right .chev {
  margin-left: -3px;
}

/* workspace */
.workspace {
  position: relative;
  flex: 1;
  min-height: 0;
  display: flex;
}
.strip {
  height: 12px;
  flex: none;
  background: #444;
  border-bottom: 1px solid #383838;
  padding: 3px 5px;
}
.strip.right {
  display: flex;
  justify-content: flex-end;
}
.double {
  width: 8px;
  height: 6px;
}
.flip {
  transform: scaleX(-1);
}
.grip {
  width: 20px;
  height: 4px;
  margin: 3px auto;
  background: repeating-linear-gradient(90deg, #3d3d3d 0 1px, transparent 1px 2px);
}
.tools {
  width: 41px;
  flex: none;
  border: 1px solid #383838;
  border-width: 0 3px 1px 1px;
}
.tools .grip {
  margin: 3px 9px 9px;
}
.tool {
  position: relative;
  display: grid;
  place-items: center;
  width: 32px;
  height: 26px;
  margin-left: 3px;
}
.tool::after {
  content: "";
  position: absolute;
  right: 4px;
  bottom: 3px;
  border: 2px solid transparent;
  border-right-color: #aaa;
  border-bottom-color: #aaa;
}
.tool.single::after {
  display: none;
}
.tool.active {
  background: #363636;
  border: 1px solid #696969;
  border-radius: 3px;
}
.tool.active::after {
  right: 3px;
  bottom: 2px;
}
.swap {
  display: flex;
  gap: 7px;
  padding: 6px 0 0 4px;
}
.swap svg {
  width: 10px;
  height: 10px;
}
.colors {
  display: grid;
  grid-template: repeat(3, 10px) / repeat(3, 10px);
  margin: 5px 0 4px 3px;
}
.colors span {
  background: #fff;
  border: 1px solid #383838;
}
.colors .front {
  grid-area: 1 / 1 / 3 / 3;
}
.colors .back {
  grid-area: 2 / 2 / 4 / 4;
  background: #ed1c24;
  border: 1px solid #fff;
}
.document {
  flex: 1;
  min-width: 0;
  display: flex;
  flex-direction: column;
}
.doc-tabs {
  display: flex;
  height: 29px;
  background: #424242;
  border-bottom: 1px solid #383838;
}
.doc-tab {
  width: 200px;
  padding: 6px 9px;
  background: #4f4f4f;
  border-left: 1px solid #383838;
}
.view {
  flex: 1;
  min-height: 0;
  display: flex;
}
.canvas {
  flex: 1;
  display: flex;
  align-items: center;
  justify-content: center;
  background: #282828;
}
.paper {
  width: 1200px;
  height: 800px;
  background: #fff;
}
.scroll-v {
  width: 16px;
  background: #4b4b4b;
}
.status {
  display: flex;
  height: 17px;
  line-height: 16px;
  background: #4a4a4a;
  border-bottom: 1px solid #383838;
}
.zoom {
  width: 48px;
  padding-left: 6px;
  color: #fff;
  font-size: 10px;
  background: #434343;
}
.doc-size {
  display: flex;
  align-items: center;
  justify-content: space-between;
  width: 184px;
  padding: 0 4px 0 24px;
  font-size: 10px;
  background: #505050;
}
.doc-size svg {
  width: 6px;
  height: 10px;
}
.column {
  width: 101px;
  flex: none;
  border: 3px solid #414141;
  border-width: 0 3px 1px;
}

/* dock */
.dock {
  width: 199px;
  flex: none;
  border-right: 2px solid #383838;
  border-bottom: 1px solid #383838;
}
.dock-group {
  display: flex;
  flex-direction: column;
  padding-bottom: 3px;
  border-bottom: 1px solid #383838;
}
.dock .grip {
  margin: 3px auto 2px;
}
.dock button {
  display: flex;
  align-items: center;
  gap: 10px;
  height: 24px;
  margin: 2px 4px;
  padding-left: 4px;
  font-size: 10px;
  font-weight: 700;
  color: #ececec;
  border: 1px solid transparent;
  border-radius: 3px;
}
.dock .selected {
  background: #383838;
  border-color: #696969;
}
.dock .wide {
  width: 22px;
  margin: 0 -2px;
}

/* swatches panel */
.swatch-panel {
  position: absolute;
  top: 10px;
  right: 200px;
  width: 234px;
  background: #535353;
  border: 1px solid #383838;
  border-top-width: 3px;
}
.panel-tabs {
  display: flex;
  align-items: center;
  height: 28px;
  background: #424242;
  font-size: 10px;
  font-weight: 700;
}
.panel-tabs button {
  width: 37px;
  height: 28px;
  padding: 0 0 2px 7px;
  text-align: left;
  white-space: nowrap;
  color: #a8a8a8;
  border-right: 1px solid #383838;
  border-bottom: 1px solid #383838;
}
.panel-tabs .current {
  width: 60px;
  color: #e8e8e8;
  background: #535353;
  border-bottom: none;
}
.panel-tabs .more {
  width: 10px;
  height: 8px;
  margin: 0 6px 0 auto;
}
.panel-tabs i {
  width: 1px;
  height: 12px;
  background: #aaa;
}
.burger {
  width: 10px;
  height: 9px;
  margin: 0 4px 0 7px;
}
.search {
  display: flex;
  align-items: center;
  padding: 9px 8px 0 7px;
}
.search-icon {
  width: 12px;
  height: 12px;
  margin-right: 3px;
}
.search input {
  flex: 1;
  min-width: 0;
  height: 22px;
  padding: 0 4px;
  font-size: 12px;
  background: #434343;
  border: 1px solid #696969;
}
.search input::placeholder {
  color: #8c8c8c;
}
.chips {
  display: grid;
  grid-template-columns: repeat(10, 16px);
  align-content: start;
  gap: 2px;
  height: 19px;
  padding: 2px 0 0 22px;
  background: #4b4b4b;
}
.chips span {
  height: 16px;
}
.recent {
  grid-template-columns: repeat(12, 16px);
  height: 35px;
  padding: 10px 0 0 8px;
  background: none;
}
.picked span:first-child {
  outline: 2px solid #31a8e8;
  outline-offset: -1px;
}
.swatch-body {
  display: flex;
  height: 149px;
  border: 1px solid #3d3d3d;
  border-width: 1px 0 2px;
  overflow: hidden;
}
.swatch-list {
  flex: 1;
}
.folder-row {
  display: flex;
  align-items: center;
  height: 28px;
  padding: 0 0 1px 7px;
  font-size: 10px;
  background: #434343;
}
.folder-row .folder {
  width: 14px;
  height: 12px;
  margin: 0 9px 0 4px;
}
.gray {
  height: 60px;
}
.swatch-scroll {
  width: 17px;
  display: flex;
  flex-direction: column;
  align-items: center;
  background: #4b4b4b;
  padding: 4px 0;
}
.swatch-scroll i {
  width: 12px;
  height: 31px;
  margin: 3px 0 auto;
  background: #696969;
}
.up {
  transform: scaleY(-1);
}
.panel-foot {
  display: flex;
  justify-content: flex-end;
  gap: 17px;
  height: 26px;
  padding: 5px 27px 0 0;
  border-bottom: 2px solid #3d3d3d;
}
.panel-foot button {
  height: 14px;
}
.panel-foot svg {
  width: 12px;
  height: 12px;
}
.swatch-panel .grip {
  margin: 2px auto 1px;
}

/* tool preset popup */
.presets {
  position: absolute;
  left: 53px;
  top: 55px;
  width: 266px;
  height: 171px;
  display: grid;
  grid-template: 131px 1fr / 209px 1fr;
  padding: 10px 0 0 10px;
  background: #535353;
  border: 3px solid #424242;
}
.preset-list {
  display: flex;
  border: 1px solid #414141;
  border-width: 1px 0 0 1px;
}
.preset-list p {
  flex: 1;
  margin: 10px 0 0;
  text-align: center;
  font-size: 10px;
  line-height: 12px;
}
.preset-list i {
  width: 16px;
  background: #4a4a4a;
}
.preset-side {
  display: flex;
  flex-direction: column;
  align-items: center;
  gap: 13px;
  padding-top: 1px;
}
.preset-gear {
  display: flex;
  align-items: center;
  justify-content: center;
  gap: 1px;
  width: 23px;
  height: 23px;
  background: #383838;
  border-radius: 2px;
}
.preset-gear i {
  border: 2px solid transparent;
  border-top-color: #ddd;
  margin-top: 7px;
}
.preset-side .gear,
.preset-side .plus {
  width: 12px;
  height: 12px;
}
.current-only {
  display: flex;
  align-items: center;
  height: 18px;
  font-size: 10px;
}
.current-only input {
  appearance: none;
  width: 10px;
  height: 10px;
  margin: 0 5px 0 -1px;
  background: #e0e0e0;
  border-radius: 2px;
}
.current-only input::before {
  content: "";
  display: block;
  width: 6px;
  height: 3px;
  margin: 2px;
  border: 2px solid #333;
  border-width: 0 0 2px 2px;
  transform: rotate(-45deg);
}

/* preset menu */
.menu {
  position: absolute;
  left: 308px;
  top: 93px;
  width: 192px;
  padding: 2px;
  background: #f0f0f0;
  border: 1px solid #999;
  color: #000;
}
.menu button {
  position: relative;
  display: block;
  width: 100%;
  height: 19px;
  padding-left: 17px;
  text-align: left;
  font-size: 11px;
  white-space: nowrap;
}
.menu button:disabled {
  color: #747474;
}
.menu .checked::before {
  content: "";
  position: absolute;
  left: 4px;
  top: 6px;
  width: 7px;
  height: 4px;
  border: 2px solid #000;
  border-width: 0 0 2px 2px;
  transform: rotate(-45deg);
}
.menu hr {
  height: 1px;
  margin: 5px 0;
  border: none;
  background: #bbb;
}

/* taskbar */
.taskbar {
  display: flex;
  height: 40px;
  flex: none;
  background: #d8d7e3;
  color: #111;
}
.start {
  width: 48px;
  display: grid;
  place-items: center;
}
.start svg {
  width: 16px;
  height: 16px;
}
.task-search {
  display: flex;
  align-items: center;
  width: 344px;
  padding-left: 11px;
  background: #fff;
  border: 1px solid #c4c4c8;
}
.task-search svg {
  width: 18px;
  height: 18px;
}
.task-search input {
  flex: 1;
  padding: 0 0 0 10px;
  border: none;
  background: none;
  font-size: 14px;
}
.task-search input::placeholder {
  color: #333;
}
.apps {
  display: flex;
}
.apps button {
  width: 49px;
  display: grid;
  place-items: center;
}
.apps svg {
  width: 24px;
  height: 24px;
}
.apps .running {
  background: #efeef4;
  border-bottom: 2px solid #1078d0;
  padding-top: 2px;
}
.letter {
  font-weight: 800;
}
.word {
  font-size: 14px;
  fill: #1d55a8;
}
.excel {
  font-size: 16px;
  fill: #2b7a2b;
}
.ps {
  font-size: 11px;
  fill: #31a8ff;
}
.tray {
  display: flex;
  align-items: center;
  gap: 8px;
  margin-left: auto;
}
.tray svg {
  width: 16px;
  height: 16px;
}
.lang {
  font-size: 12px;
  margin-left: 8px;
}
.tray time {
  width: 69px;
  text-align: center;
  font-size: 11px;
  line-height: 18px;
}
.tray .note {
  width: 18px;
  height: 18px;
  margin-left: 5px;
}
.tray i {
  width: 5px;
  height: 40px;
  margin-left: 9px;
  border-left: 1px solid #aaa;
}
```
